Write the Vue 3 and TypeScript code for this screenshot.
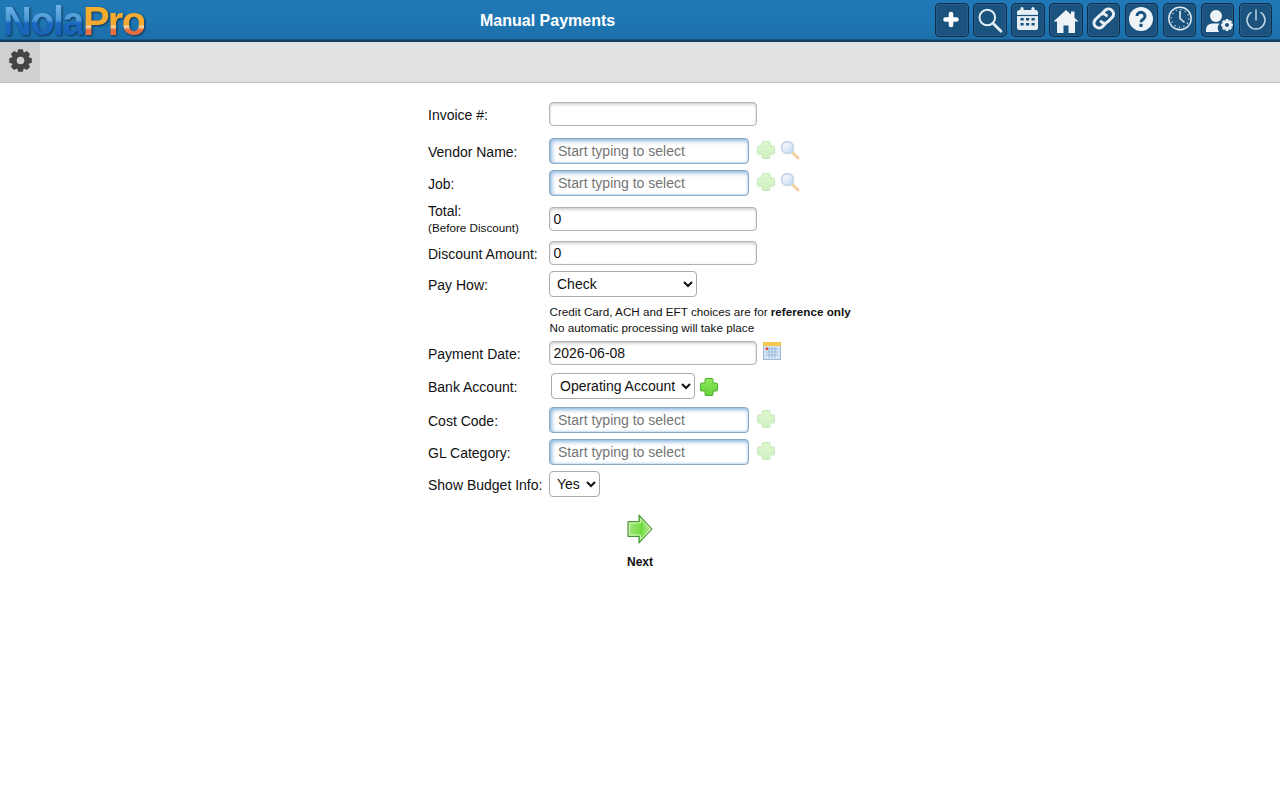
<script setup lang="ts">
import { ref } from 'vue'

const invoice = ref('')
const total = ref('0')
const discount = ref('0')
const payDate = ref('2026-06-08')
const payHow = ref('Check')
const bank = ref('Operating Account')
const budget = ref('Yes')

// 8 tooth gear, used in the sub bar and on the user settings button
function gearPath(c: number, outer: number, inner: number, hole: number): string {
  const pts: string[] = []
  const teeth = 8
  for (let i = 0; i < teeth; i++) {
    const a = (i / teeth) * Math.PI * 2
    const w = Math.PI / teeth
    const steps: [number, number][] = [
      [a - w * 0.95, inner],
      [a - w * 0.5, outer],
      [a + w * 0.5, outer],
      [a + w * 0.95, inner],
    ]
    for (const [ang, r] of steps) {
      pts.push(`${(c + Math.cos(ang) * r).toFixed(2)} ${(c + Math.sin(ang) * r).toFixed(2)}`)
    }
  }
  const ring = `M${c - hole} ${c}a${hole} ${hole} 0 1 0 ${hole * 2} 0a${hole} ${hole} 0 1 0 ${-hole * 2} 0Z`
  return `M${pts.join('L')}Z${ring}`
}

const bigGear = gearPath(12, 12, 9.2, 4)
const smallGear = gearPath(6, 6, 4.6, 2)
</script>

<template>
  <div class="page">
    <header class="topbar">
      <div class="logo"><span class="nola">Nola</span><span class="pro">Pro</span></div>
      <h1 class="title">Manual Payments</h1>
      <nav class="tools">
        <a class="tool">
          <svg viewBox="0 0 33.500 34"><path d="M16 11v11M10.500 16.500h11" stroke="#fff" stroke-width="4.600" stroke-linecap="round" fill="none" /></svg>
        </a>
        <a class="tool">
          <svg viewBox="0 0 33.500 34"><circle cx="14.300" cy="14.500" r="7.800" fill="none" stroke="#e3edf3" stroke-width="2" /><path d="M20 20.200l8 8" stroke="#e3edf3" stroke-width="2.800" stroke-linecap="round" /></svg>
        </a>
        <a class="tool">
          <svg viewBox="0 0 33.500 34">
            <rect x="6" y="7" width="21" height="20" rx="2.500" fill="#e8eff4" />
            <path d="M11 5.500v4M22 5.500v4" stroke="#e8eff4" stroke-width="3.200" stroke-linecap="round" />
            <path d="M6 12.500h21" stroke="#1b537f" stroke-width="1.200" />
            <path d="M9.500 15h3.200v2.500H9.500zM15 15h3.200v2.500H15zM20.500 15h3.200v2.500h-3.200zM9.500 20h3.200v2.500H9.500zM15 20h3.200v2.500H15zM20.500 20h3.200v2.500h-3.200z" fill="#1b537f" />
          </svg>
        </a>
        <a class="tool">
          <svg viewBox="0 0 33.500 34"><path d="M17 7l5 4.500V8.500h3.500v6.200L29.500 18.500h-3.500V30h-6.500v-7.500h-5V30H8V18.500H4.500z" fill="#eef3f7" /></svg>
        </a>
        <a class="tool">
          <svg viewBox="0 0 33.500 34">
            <g fill="none" stroke="#e8eff4" stroke-width="3" stroke-linecap="round">
              <path d="M15 10.500l3.500-3.500a5 5 0 0 1 7 7l-4.500 4.500a5 5 0 0 1-7 0" />
              <path d="M18.500 20.500l-3.500 3.500a5 5 0 0 1-7-7l4.500-4.500a5 5 0 0 1 7 0" />
            </g>
          </svg>
        </a>
        <a class="tool">
          <svg viewBox="0 0 33.500 34">
            <circle cx="16" cy="16" r="12" fill="#eef3f7" />
            <path d="M12 13a4 3.800 0 1 1 6.300 3.200c-1.400 1-2.300 1.300-2.300 3.100" fill="none" stroke="#1b537f" stroke-width="3" />
            <rect x="14.400" y="20.800" width="3.200" height="3.200" rx=".6" fill="#1b537f" />
          </svg>
        </a>
        <a class="tool">
          <svg viewBox="0 0 33.500 34">
            <circle cx="17" cy="15.500" r="11.200" fill="none" stroke="#e3edf3" stroke-width="1.400" />
            <circle cx="17" cy="15.500" r="8.800" fill="none" stroke="#e3edf3" stroke-width="1.400" stroke-dasharray="1 3.610" />
            <path d="M17 8.500v7l4 3.500" fill="none" stroke="#e3edf3" stroke-width="1.600" stroke-linecap="round" />
          </svg>
        </a>
        <a class="tool">
          <svg viewBox="0 0 33.500 34">
            <circle cx="15" cy="13" r="6" fill="#eef3f7" />
            <path d="M5 29v-2.500a6 6 0 0 1 6-6h7.500a7.500 7.500 0 0 0-.500 8.500z" fill="#eef3f7" />
            <path :d="smallGear" transform="translate(20 16)" fill="#eef3f7" fill-rule="evenodd" />
          </svg>
        </a>
        <a class="tool">
          <svg viewBox="0 0 33.500 34">
            <path d="M12 9.500a9 9 0 1 0 10 0" fill="none" stroke="#bfd4e2" stroke-width="1.500" stroke-linecap="round" />
            <path d="M17 7v10" stroke="#bfd4e2" stroke-width="1.500" stroke-linecap="round" />
          </svg>
        </a>
      </nav>
    </header>

    <div class="subbar">
      <a class="gear-cell">
        <svg viewBox="0 0 24 24" width="23" height="23"><path :d="bigGear" fill="#444" fill-rule="evenodd" /></svg>
      </a>
    </div>

    <form class="form" @submit.prevent>
      <div class="row" style="margin-top: 0">
        <label>Invoice #:</label>
        <input v-model="invoice" class="text" type="text" />
      </div>

      <div class="row gap-12">
        <label>Vendor Name:</label>
        <input class="text lookup" type="text" placeholder="Start typing to select" />
        <svg class="icon faded" viewBox="0 0 20 20"><use href="#plus-icon" /></svg>
        <svg class="icon faded lens" viewBox="0 0 20 20"><use href="#lens-icon" /></svg>
      </div>

      <div class="row">
        <label>Job:</label>
        <input class="text lookup" type="text" placeholder="Start typing to select" />
        <svg class="icon faded" viewBox="0 0 20 20"><use href="#plus-icon" /></svg>
        <svg class="icon faded lens" viewBox="0 0 20 20"><use href="#lens-icon" /></svg>
      </div>

      <div class="row gap-11 total-row">
        <label class="two-line">Total:<small>(Before Discount)</small></label>
        <input v-model="total" class="text" type="text" />
      </div>

      <div class="row gap-10">
        <label>Discount Amount:</label>
        <input v-model="discount" class="text" type="text" />
      </div>

      <div class="row">
        <label>Pay How:</label>
        <select v-model="payHow" class="pay-how">
          <option>Check</option>
          <option>Credit Card</option>
          <option>ACH</option>
          <option>EFT</option>
        </select>
      </div>

      <p class="note">
        Credit Card, ACH and EFT choices are for <b>reference only</b><br />
        No automatic processing will take place
      </p>

      <div class="row date-row">
        <label>Payment Date:</label>
        <input v-model="payDate" class="text" type="text" />
        <svg class="calendar" viewBox="0 0 18 18">
          <rect x=".5" y=".5" width="17" height="17" fill="#d5e6f7" stroke="#9db9d6" />
          <rect x="0" y="0" width="18" height="4" fill="#f3c84c" />
          <path d="M3 7h12M3 10h12M3 13h12M6 5v11M9 5v11M12 5v11" stroke="#86a9cf" stroke-width=".7" />
          <rect x="2.500" y="5.500" width="2.500" height="2.500" fill="#e2453c" />
        </svg>
      </div>

      <div class="row gap-8">
        <label>Bank Account:</label>
        <select v-model="bank" class="bank">
          <option>Operating Account</option>
        </select>
        <svg class="icon bank-add" viewBox="0 0 20 20"><use href="#plus-icon" /></svg>
      </div>

      <div class="row gap-8">
        <label>Cost Code:</label>
        <input class="text lookup" type="text" placeholder="Start typing to select" />
        <svg class="icon faded" viewBox="0 0 20 20"><use href="#plus-icon" /></svg>
      </div>

      <div class="row">
        <label>GL Category:</label>
        <input class="text lookup" type="text" placeholder="Start typing to select" />
        <svg class="icon faded" viewBox="0 0 20 20"><use href="#plus-icon" /></svg>
      </div>

      <div class="row">
        <label>Show Budget Info:</label>
        <select v-model="budget" class="yes-no">
          <option>Yes</option>
          <option>No</option>
        </select>
      </div>

      <button class="next" type="submit">
        <svg viewBox="0 0 26 30" width="26" height="30">
          <defs>
            <linearGradient id="next-fill" x1="0" y1="0" x2="1" y2="0">
              <stop offset="0" stop-color="#a6e77e" />
              <stop offset=".55" stop-color="#6fdc3f" />
              <stop offset="1" stop-color="#c4efaa" />
            </linearGradient>
          </defs>
          <path d="M1 7.500h11V1l13 14-13 14v-6.500H1z" fill="url(#next-fill)" stroke="#4c8f3a" stroke-width="1.100" stroke-linejoin="round" />
          <path d="M2.500 9h11V4.500L23 15l-9.500 10.500V21h-11z" fill="none" stroke="#d8f5c4" stroke-width=".9" />
        </svg>
        <span>Next</span>
      </button>
    </form>

    <!-- shared shapes for the small form icons -->
    <svg class="defs" width="0" height="0">
      <defs>
        <linearGradient id="plus-fill" x1="0" y1="0" x2="0" y2="1">
          <stop offset="0" stop-color="#8ee85c" />
          <stop offset="1" stop-color="#62d23a" />
        </linearGradient>
        <linearGradient id="lens-glass" x1="0" y1="0" x2="1" y2="1">
          <stop offset="0" stop-color="#ffffff" />
          <stop offset="1" stop-color="#7fb2e6" />
        </linearGradient>
        <symbol id="plus-icon" viewBox="0 0 20 20">
          <path d="M7 1.500h6a1 1 0 0 1 1 1V6h3.500a1 1 0 0 1 1 1v6a1 1 0 0 1-1 1H14v3.500a1 1 0 0 1-1 1H7a1 1 0 0 1-1-1V14H2.500a1 1 0 0 1-1-1V7a1 1 0 0 1 1-1H6V2.500a1 1 0 0 1 1-1z" fill="url(#plus-fill)" stroke="#4cae2c" stroke-width="1" />
        </symbol>
        <symbol id="lens-icon" viewBox="0 0 20 20">
          <path d="M11.500 11.500l6.500 6.500" stroke="#e09a3e" stroke-width="3" stroke-linecap="round" />
          <circle cx="7.500" cy="7.500" r="6" fill="url(#lens-glass)" stroke="#6d9cc9" stroke-width="1.500" />
        </symbol>
      </defs>
    </svg>
  </div>
</template>

<style scoped>
* {
  box-sizing: border-box;
}

.page {
  font-family: 'Liberation Sans', Arial, sans-serif;
  font-size: 14px;
  color: #111;
}

.topbar {
  height: 42px;
  display: flex;
  align-items: center;
  background: linear-gradient(to bottom, #2079b6 0%, #1e76b2 50%, #1c6fa9 92%, #123f63 96%, #0f3a5c 100%);
}

.logo {
  width: 480px;
  padding-left: 3px;
  font-size: 40px;
  font-weight: bold;
  line-height: 38px;
  letter-spacing: -1.7px;
  white-space: nowrap;
  filter: drop-shadow(1px 1px 1px rgba(10, 30, 50, 0.75));
}

.nola {
  background: linear-gradient(to bottom, #6db0e4 15%, #4a9ad9 48%, #1a68c2 55%, #1a5fb0 100%);
  -webkit-background-clip: text;
  background-clip: text;
  color: transparent;
}

.pro {
  background: linear-gradient(to bottom, #f8b02c 15%, #f5a833 58%, #f7d9a8 63%, #ea7040 70%, #e8663a 100%);
  -webkit-background-clip: text;
  background-clip: text;
  color: transparent;
}

.title {
  margin: 0;
  font-size: 16px;
  font-weight: bold;
  color: #fff;
  white-space: nowrap;
}

.tools {
  margin: 0 8px 2px auto;
  display: flex;
  gap: 4.4px;
}

.tool {
  width: 33.5px;
  height: 34px;
  background: #1b537f;
  border-radius: 5px;
  display: block;
  box-shadow: inset 0 0 0 1px #0c2c47, inset 0 0 0 2px rgba(70, 130, 175, 0.25);
}

.tool svg {
  display: block;
  width: 100%;
  height: 100%;
}

.subbar {
  height: 41px;
  background: #e1e2e4;
  border-bottom: 1px solid #bdbdbd;
}

.gear-cell {
  width: 40px;
  height: 40px;
  padding-bottom: 3px;
  background: #cfd0d2;
  display: flex;
  align-items: center;
  justify-content: center;
}

.form {
  width: 440px;
  margin-left: 428px;
  padding-top: 19px;
}

.row {
  display: flex;
  align-items: center;
  margin-top: 6px;
}

.gap-8 { margin-top: 8px; }
.gap-10 { margin-top: 10px; }
.gap-11 { margin-top: 11px; }
.gap-12 { margin-top: 12px; }

label {
  width: 121px;
  flex: none;
  font-size: 14px;
  line-height: 16px;
  padding-top: 2px;
}

.total-row {
  height: 24px;
}

.two-line {
  padding-top: 0;
}

.two-line small {
  display: block;
  font-size: 11.7px;
  line-height: 17px;
}

.text {
  width: 208px;
  height: 24px;
  padding: 1px 3.5px;
  font: 14px 'Liberation Sans', Arial, sans-serif;
  color: #111;
  background: #fff;
  border: 1px solid #b4b4b4;
  border-radius: 4px;
  box-shadow: inset 0 2px 3px rgba(0, 0, 0, 0.16), inset 0 0 1px rgba(0, 0, 0, 0.2);
  outline: none;
}

.lookup {
  width: 200px;
  height: 26px;
  padding: 1px 8px;
  margin-right: 7px;
  border: 1px solid #8aa9c2;
  box-shadow: inset 2px 2px 4px rgba(90, 150, 210, 0.6), inset 0 0 3px rgba(90, 150, 210, 0.55);
}

.lookup::placeholder {
  color: #757575;
  opacity: 1;
}

select {
  height: 26px;
  font: 14px 'Liberation Sans', Arial, sans-serif;
  color: #111;
  background: #fff;
  border: 1px solid #aaa;
  border-radius: 4px;
  padding: 0 3px;
}

.pay-how { width: 148px; }

.bank {
  width: 144px;
  margin-left: 2px;
  padding-left: 4px;
}

.yes-no { width: 51px; }

.icon {
  width: 20px;
  height: 20px;
  flex: none;
  margin-top: -2px;
}

.faded { opacity: 0.3; }

.lens {
  margin-left: 4px;
  opacity: 0.45;
}

.bank-add {
  margin-left: 4px;
  margin-top: 2px;
}

.note {
  margin: 7px 0 5px 121px;
  padding-left: 0.5px;
  font-size: 11.7px;
  line-height: 16px;
  height: 32px;
}

.date-row {
  margin-top: 0;
}

.calendar {
  width: 18px;
  height: 18px;
  margin: -4px 0 0 6px;
}

.next {
  margin: 17px 0 0 185px;
  width: 54px;
  padding: 0;
  background: none;
  border: 0;
  font: bold 12px 'Liberation Sans', Arial, sans-serif;
  color: #111;
  display: flex;
  flex-direction: column;
  align-items: center;
}

.next span {
  margin-top: 11px;
}

.defs {
  position: absolute;
}
</style>

<style>
html,
body {
  margin: 0;
  background: #fff;
}
</style>
